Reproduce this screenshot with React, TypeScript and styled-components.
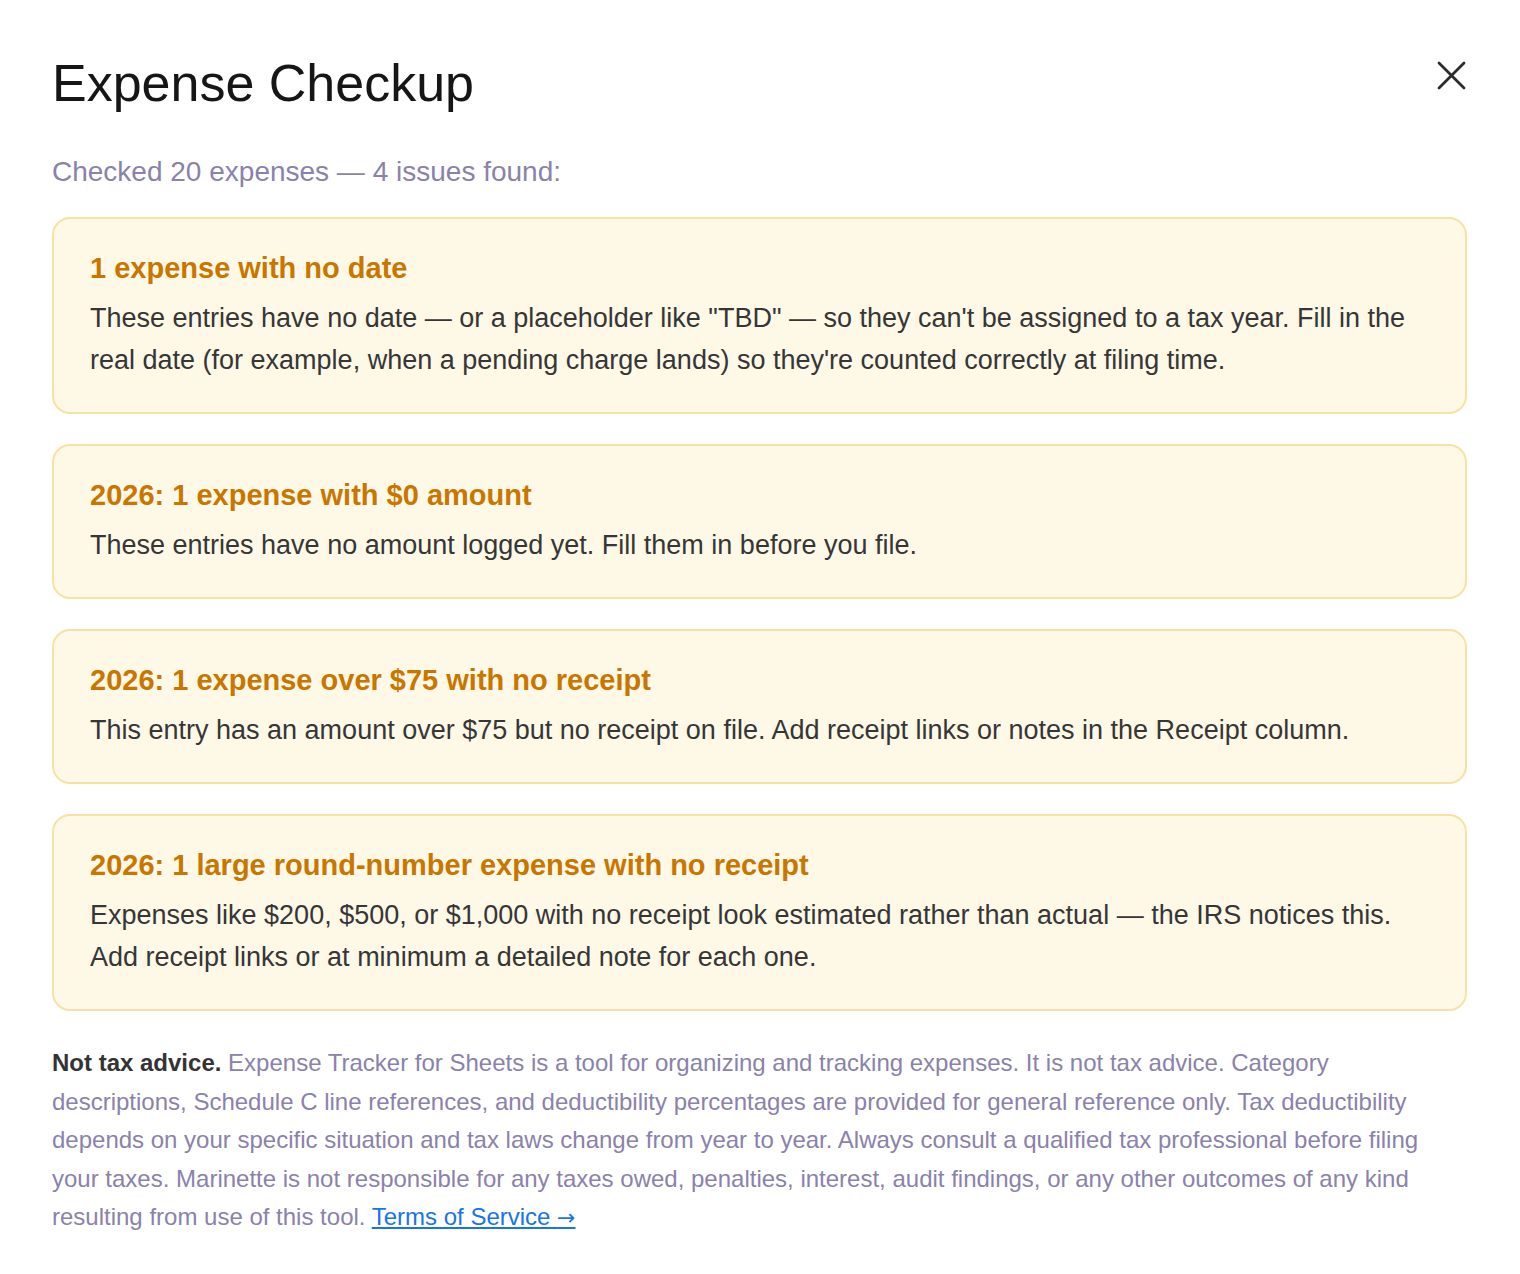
import styled, { createGlobalStyle } from "styled-components";

type Issue = {
  id: number;
  title: string;
  body: string;
};

const issues: Issue[] = [
  {
    id: 1,
    title: "1 expense with no date",
    body: "These entries have no date \u2014 or a placeholder like \"TBD\" \u2014 so they can't be assigned to a tax year. Fill in the real date (for example, when a pending charge lands) so they're counted correctly at filing time.",
  },
  {
    id: 2,
    title: "2026: 1 expense with $0 amount",
    body: "These entries have no amount logged yet. Fill them in before you file.",
  },
  {
    id: 3,
    title: "2026: 1 expense over $75 with no receipt",
    body: "This entry has an amount over $75 but no receipt on file. Add receipt links or notes in the Receipt column.",
  },
  {
    id: 4,
    title: "2026: 1 large round-number expense with no receipt",
    body: "Expenses like $200, $500, or $1,000 with no receipt look estimated rather than actual \u2014 the IRS notices this. Add receipt links or at minimum a detailed note for each one.",
  },
];

export default function App() {
  const checked = 20;

  return (
    <>
      <GlobalStyle />
      <Container>
        <Header>
          <Title>Expense Checkup</Title>
          <CloseButton aria-label="Close">
            <svg width="32" height="32" viewBox="0 0 32 32" fill="none">
              <path
                d="M4 4 L29 29 M29 4 L4 29"
                stroke="#2b2b2b"
                strokeWidth="2.8"
                strokeLinecap="round"
              />
            </svg>
          </CloseButton>
        </Header>
        <Summary>
          Checked {checked} expenses — {issues.length} issues found:
        </Summary>
        <IssueList>
          {issues.map((issue) => (
            <IssueCard key={issue.id}>
              <IssueTitle>{issue.title}</IssueTitle>
              <IssueBody>{issue.body}</IssueBody>
            </IssueCard>
          ))}
        </IssueList>
        <Disclaimer>
          <strong>Not tax advice.</strong> Expense Tracker for Sheets is a tool
          for organizing and tracking expenses. It is not tax advice. Category
          descriptions, Schedule C line references, and deductibility
          percentages are provided for general reference only. Tax
          deductibility depends on your specific situation and tax laws change
          from year to year. Always consult a qualified tax professional before
          filing your taxes. Marinette is not responsible for any taxes owed,
          penalties, interest, audit findings, or any other outcomes of any
          kind resulting from use of this tool.{" "}
          <a href="#terms">
            Terms of Service <Arrow>→</Arrow>
          </a>
        </Disclaimer>
      </Container>
    </>
  );
}

const GlobalStyle = createGlobalStyle`
  body {
    margin: 0;
    background: #ffffff;
    font-family: "Liberation Sans", Arial, Helvetica, sans-serif;
  }
`;

const Container = styled.div`
  padding: 52px 53px 40px 52px;
`;

const Header = styled.div`
  display: flex;
  justify-content: space-between;
  align-items: flex-start;
`;

const Title = styled.h1`
  margin: 0;
  font-size: 52px;
  line-height: 62px;
  font-weight: 400;
  color: #161616;
`;

const CloseButton = styled.button`
  width: 32px;
  height: 32px;
  margin-top: 7px;
  padding: 0;
  border: none;
  background: none;
  cursor: pointer;
  display: flex;
  align-items: center;
  justify-content: center;
`;

const Summary = styled.p`
  margin: 37px 0 24px;
  font-size: 28px;
  line-height: 42px;
  color: #8a82ab;
`;

const IssueList = styled.div`
  display: flex;
  flex-direction: column;
  gap: 30px;
`;

const IssueCard = styled.div`
  padding: 30px 36px 31px;
  background: #fef8e6;
  border: 2px solid #f6e3a4;
  border-radius: 18px;
`;

const IssueTitle = styled.div`
  font-size: 29px;
  line-height: 38px;
  font-weight: 700;
  color: #c97600;
  margin-bottom: 10px;
`;

const IssueBody = styled.p`
  margin: 0;
  font-size: 27px;
  line-height: 42px;
  color: #363636;
`;

const Disclaimer = styled.p`
  margin: 33px 0 0;
  font-size: 24px;
  line-height: 38.5px;
  color: #8a82ab;

  strong {
    color: #333333;
    font-weight: 700;
  }

  a {
    color: #1a73e8;
    text-decoration: underline;
  }
`;

const Arrow = styled.span`
  font-family: "DejaVu Sans", sans-serif;
  font-size: 22px;
`;
